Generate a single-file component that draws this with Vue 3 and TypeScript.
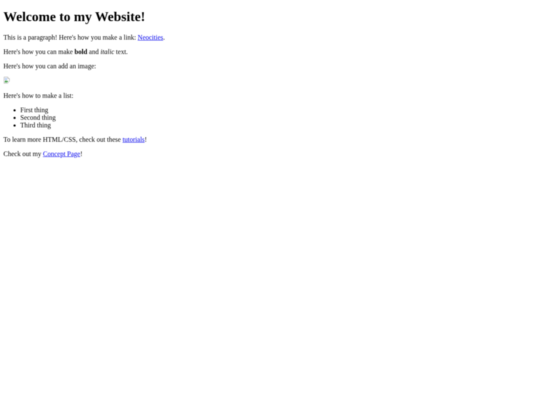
<script setup lang="ts">
const items: string[] = ['First thing', 'Second thing', 'Third thing']
</script>

<template>
  <div class="viewport">
    <main class="page">
      <div class="content">
        <h1>Welcome to my Website!</h1>
        <p>This is a paragraph! Here's how you make a link: <a href="#">Neocities</a>.</p>
        <p>Here's how you can make <strong>bold</strong> and <em>italic</em> text.</p>
        <p>Here's how you can add an image:</p>
        <p>
          <svg class="broken" viewBox="0 0 16 16" role="img" aria-label="broken image">
            <path d="M1.5 .5H10.5L14.5 4.5V10L10 15.5H1.5Z" fill="#fff" stroke="#a6a6a6" stroke-width="1" />
            <path d="M10.5 .5V4.5H14.5" fill="#ececec" stroke="#a6a6a6" stroke-width="1" />
            <rect x="3" y="2.5" width="6" height="5.5" fill="#c3d4f3" />
            <path d="M3 13.5V11L6 8L8.5 10.5L10 9L11.5 10.5L9 13.5Z" fill="#4c9f4c" />
          </svg>
        </p>
        <p>Here's how to make a list:</p>
        <ul>
          <li v-for="item in items" :key="item">{{ item }}</li>
        </ul>
        <p>To learn more HTML/CSS, check out these <a href="#">tutorials</a>!</p>
        <p>Check out my <a href="#">Concept Page</a>!</p>
      </div>
    </main>
  </div>
</template>

<style scoped>
.viewport {
  width: 540px;
  height: 405px;
  overflow: hidden;
}
.page {
  width: 1280px;
  height: 960px;
  font-family: "Liberation Serif", serif;
  font-size: 16px;
  color: #000;
  background: #fff;
  transform: scale(0.421875);
  transform-origin: 0 0;
  will-change: transform;
}
.content {
  box-sizing: border-box;
  height: 960px;
  padding: 21.44px 8px 0;
  filter: blur(0.9px);
}
h1 {
  font-size: 32px;
  font-weight: 700;
  margin: 0 0 21.44px;
}
p {
  margin: 16px 0;
}
ul {
  margin: 16px 0;
  padding-left: 40px;
}
a {
  color: #00e;
  text-decoration: underline;
}
.broken {
  width: 16px;
  height: 16px;
}
</style>

<style>
html, body {
  margin: 0;
  background: #fff;
}
</style>
